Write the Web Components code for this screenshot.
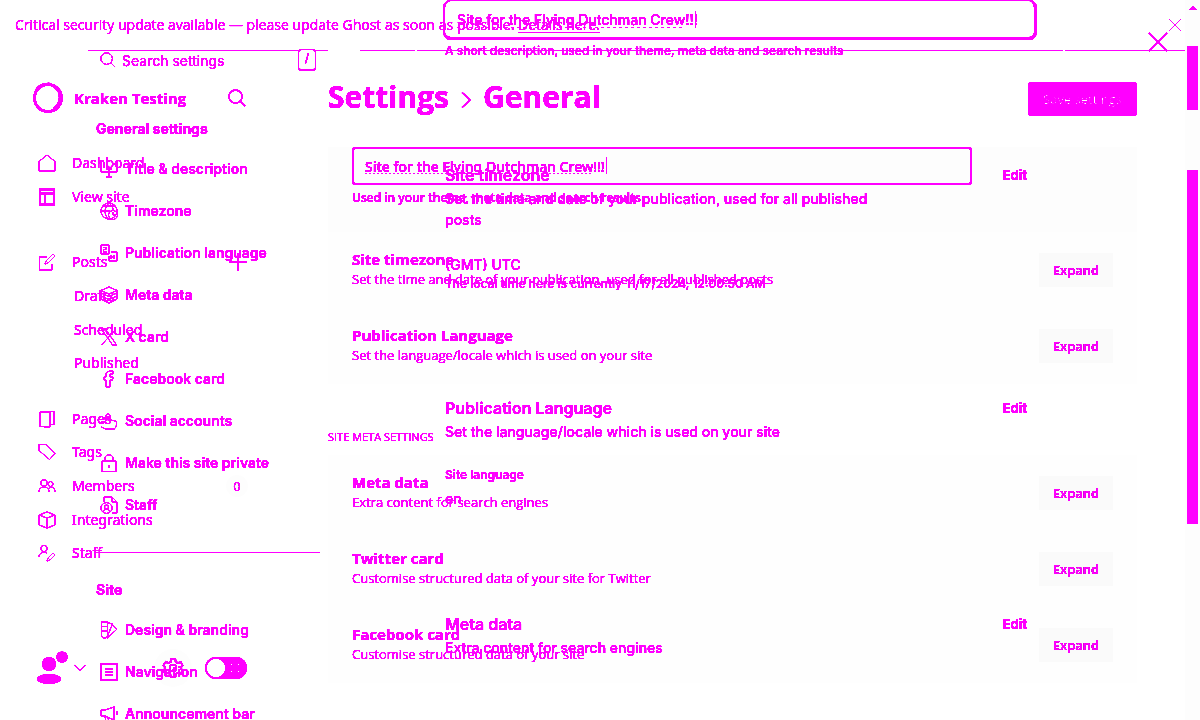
<!DOCTYPE html>
<html lang="en">
<head>
<meta charset="utf-8">
<title>Settings: General</title>
<style>
html,body{margin:0;background:#fff;overflow:hidden}
</style>
</head>
<body>
<settings-diff></settings-diff>

<script>
const INK = '#f0f';
const define = (name, html, setup) => {
  const t = document.createElement('template');
  t.innerHTML = html;
  customElements.define(name, class extends HTMLElement {
    connectedCallback() {
      if (this.shadowRoot) return;
      this.attachShadow({mode: 'open'}).append(t.content.cloneNode(true));
      if (setup) setup(this.shadowRoot, this);
    }
  });
};

const ICONS = {
  home: '<path d="M1 7.500L9 1l8 6.500V17H1z"/>',
  layout: '<path d="M2 1.500h14v15H2zM2 5.500h14M7 5.500v11" stroke-width="1.600"/>',
  edit: '<path d="M9 4H1.500v13H14v-6M7 11l1-3 7-7 2 2-7 7z"/>',
  pages: '<path d="M2 2h10v14.500H2zM5 1.500h11v13h-3M5 16l1 1h6"/>',
  tag: '<path d="M1 1.500h7l9 9-5.500 6L1 7.500z"/>',
  members: '<circle cx="6" cy="6" r="3.200"/><circle cx="12.500" cy="7" r="2.500"/><path d="M1 15c0-7 10-7 10 0M11 11c3-2 6 0 6 4"/>',
  cube: '<path d="M9 1l8 3v10l-8 3-8-3V4zM1 4l8 3 8-3M9 7v10"/>',
  staffpen: '<circle cx="6" cy="4.500" r="3.200"/><path d="M1 13c0-4 4-5.500 8-4M9 17l1-3 5-5 2 2-5 5z"/>',
  search: '<circle cx="7.500" cy="7.500" r="6.500"/><path d="M12.500 12.500L17 17"/>',
  plus: '<path d="M9 0v18M0 9h18"/>',
  close: '<path d="M1 1l16 16M17 1L1 17"/>',
  right: '<path d="M5 1.500L13 9l-8 7.500"/>',
  down: '<path d="M1 5l8 8 8-8"/>',
  desc: '<path d="M1 1v11h6M17 1v11h-6M9 9v8M6 9h6M6 17h6M3 12h12"/>',
  globe: '<circle cx="9" cy="9" r="8"/><path d="M1 9h9M3 4h12M9 1C4 6 4 12 8 17M9 1c3 2 4 5 4 8"/><circle cx="13" cy="13" r="4.500"/><path d="M13 10v3h3"/>',
  lang: '<path d="M1 1h8v9H1zM3 3.500h4M3 6l4-1.500M3 8h4M11 8h6v9H9v-5M11 15v-4l3 4v-4"/>',
  layers: '<path d="M9 1l8 3.500L9 8 1 4.500zM1 7l8 3.500L17 7M1 10l8 3.500 8-3.500M1 13l8 4 8-4M1 4.500V13M17 4.500V13"/>',
  x: '<path d="M1.500 1h4l11 16h-4zM16 1L1.500 17"/>',
  fb: '<path d="M6 17V10H4V7h2V5c0-3 2-4 7-4v3h-3v3h3l-.500 3H10v7z"/>',
  social: '<path d="M6 9V4c0-3 4-3 4 0v4l6 1c1 0 1 7-2 8H6l-5-2M1 10h5M4 6h7"/>',
  lock: '<path d="M2 7h14v10.500H2zM5 7V4.500C5-.500 13-.500 13 4.500V7M9 11v3"/>',
  stafffile: '<path d="M4 6V1h8l5 5v11h-5M12 1v5h5"/><circle cx="6.500" cy="12" r="5.500"/><circle cx="6.500" cy="11" r="2"/><path d="M3 16c1-4 6-4 7 0"/>',
  swatch: '<path d="M1.500 1h6v13c0 4-6 4-6 0zM1.500 5.500h6M1.500 10h6M7.500 1.500l5 1.500-5 12M12 4l5 4-9.500 9"/>',
  list: '<path d="M1 1h16v16H1zM5 6h8M5 9h8M5 12h8" stroke-width="1.500"/>',
  horn: '<path d="M1 5v6h4l9 4V2L5 5zM14 1v14M17 6v4M5 11l1 6h3l-1-4"/>',
  gear: '<circle cx="9" cy="9" r="3"/><path d="M7 1h4l.500 2.500 2 1L16 3.500l1.500 3L16 9l1.500 2.500-2 3-2.500-1-2 1L11 17H7l-.500-2.500-2-1-2.500 1-1.500-3L2 9 .500 6.500l2-3 2.500 1 2-1z" stroke-width="1.500"/>'
};
class UiIcon extends HTMLElement {
  static observedAttributes = ['name'];
  constructor() {
    super();
    this.attachShadow({mode: 'open'});
  }
  attributeChangedCallback() {
    this.shadowRoot.innerHTML =
      `<style>:host{display:block;flex:none;width:var(--s,18px);height:var(--s,18px)}svg{display:block;overflow:visible;fill:none;stroke:currentColor;stroke-width:var(--w,1)}</style>
       <svg viewBox="0 0 18 18" width="100%" height="100%" aria-hidden="true">${ICONS[this.getAttribute('name')]}</svg>`;
  }
}
customElements.define('ui-icon', UiIcon);

/* ---------- previous admin ---------- */

define('legacy-alert', `
<style>
:host{display:flex;align-items:center;justify-content:space-between;height:50px;padding:0 4px 0 15px;font:14px/20px "Open Sans",sans-serif}
a{color:inherit;text-underline-offset:2px}
button{all:unset;display:block}
ui-icon{--s:12px}
</style>
<span>Critical security update available — please update Ghost as soon as possible. <a href="#details">Details here.</a></span>
<button aria-label="Dismiss"><ui-icon name="close"></ui-icon></button>`);

define('nav-link', `
<style>
:host{display:flex;flex:1;align-items:center}
a{display:grid;grid-template-columns:18px 1fr;gap:16px;align-items:center;color:inherit;text-decoration:none;flex:1}
ui-icon{--s:18px}
:host([sub]) a{display:block;padding-left:36px}
:host([sub]) ui-icon{display:none}
</style>
<a href="#"><ui-icon></ui-icon><slot></slot></a><slot name="end"></slot>`,
(r, h) => r.querySelector('ui-icon').setAttribute('name', h.getAttribute('icon') || 'home'));

define('legacy-sidebar', `
<style>
:host{display:flex;flex-direction:column;width:280px;box-sizing:border-box;padding:30px 32px 0;font:14px/20px "Noto Sans",sans-serif}
header{display:flex;align-items:center;height:34px;font:700 15px/20px "Open Sans",sans-serif;margin-bottom:31px}
.logo{display:block;width:32px;height:32px;margin-right:10px;overflow:visible}
header ui-icon{margin:0 2px 0 auto;--w:1.300}
nav{padding-left:6px;display:flex;flex-direction:column}
.a{height:68px}.b{height:34px;margin-top:31px}.c{height:101px}.d{height:168px;margin-top:22px}
.add{margin-right:1px}
.count{width:22px;height:22px;border-radius:50%;background:rgba(0,0,0,.02);text-align:center;line-height:22px;font-size:13px}
footer{display:flex;align-items:center;margin-top:78px;height:40px;padding-right:1px}
.avatar{width:36px;height:36px;overflow:visible;fill:currentColor}
.menu{all:unset;display:block;margin-left:6px}
.menu ui-icon{--s:12px;--w:1.500}
.gear{display:flex;margin-left:auto;width:38px;height:38px;border-radius:50%;background:rgba(0,0,0,.02);align-items:center;justify-content:center;color:inherit}
.gear ui-icon{--s:20px}
.toggle{appearance:none;margin:0 0 0 13px;width:42px;height:22px;border-radius:11px;
background:radial-gradient(circle at 11px 11px,#fff 9px,transparent 10px),
linear-gradient(#fff,#fff) 26px 7px/1px 1px no-repeat,linear-gradient(#fff,#fff) 33px 7px/1px 1px no-repeat,
linear-gradient(#fff,#fff) 26px 14px/1px 1px no-repeat,linear-gradient(#fff,#fff) 33px 14px/1px 1px no-repeat,#f0f}
</style>
<header>
<svg class="logo" viewBox="0 0 32 32" fill="none" stroke="currentColor" aria-hidden="true"><circle cx="16" cy="16" r="13.500" stroke-width="2.500"/><path d="M22 4c9 6 8 17 0 23M4 9C8 2 14 2 19 2.500" stroke-width="3"/></svg>
<span>Kraken Testing</span><ui-icon name="search"></ui-icon></header>
<nav class="a"><nav-link icon="home">Dashboard</nav-link><nav-link icon="layout">View site</nav-link></nav>
<nav class="b"><nav-link icon="edit">Posts<ui-icon class="add" slot="end" name="plus"></ui-icon></nav-link></nav>
<nav class="c"><nav-link sub>Drafts</nav-link><nav-link sub>Scheduled</nav-link><nav-link sub>Published</nav-link></nav>
<nav class="d"><nav-link icon="pages">Pages</nav-link><nav-link icon="tag">Tags</nav-link><nav-link icon="members">Members<span class="count" slot="end">0</span></nav-link><nav-link icon="cube">Integrations</nav-link><nav-link icon="staffpen">Staff</nav-link></nav>
<footer>
<svg class="avatar" viewBox="0 0 36 36" aria-hidden="true"><circle cx="17" cy="14" r="7"/><ellipse cx="17" cy="29" rx="12" ry="5"/><circle cx="30" cy="7" r="5.500"/></svg>
<button class="menu" aria-label="Account menu"><ui-icon name="down"></ui-icon></button>
<a class="gear" href="#settings" aria-label="Settings"><ui-icon name="gear"></ui-icon></a>
<input class="toggle" type="checkbox" aria-label="Dark mode">
</footer>`);

define('legacy-row', `
<style>
:host{display:flex;flex:1;align-items:center;justify-content:space-between;padding:0 24px}
div{padding-bottom:3px}
b{display:block;font:700 15px/20px "Open Sans",sans-serif}
p{margin:0;font:13px/20px "Open Sans",sans-serif}
button{border:0;background:rgba(0,0,0,.03);color:inherit;width:74px;height:34px;padding:0;font:600 13px/20px "Open Sans",sans-serif}
</style>
<div><b><slot></slot></b><p><slot name="note"></slot></p></div><button>Expand</button>`);

define('legacy-main', `
<style>
:host{display:block;padding:31px 48px 0;font:13px/20px "Open Sans",sans-serif}
header{display:flex;align-items:center;height:34px}
h1{display:flex;align-items:center;margin:0;padding-bottom:4px;font:700 30px/34px "Open Sans",sans-serif;gap:8px}
h1 ui-icon{--w:1.500;margin-top:6px}
h1+button{margin-left:auto;width:109px;height:34px;border:0;border-radius:3px;padding:0;background:#f0f;color:#fff;font:13px/20px "Open Sans",sans-serif}
.panel{display:flex;flex-direction:column;background:rgba(0,0,0,.01)}
.field{margin-top:31px;height:85px;box-sizing:border-box;padding:0 24px;background:rgba(0,0,0,.015)}
input{display:block;width:620px;max-width:100%;height:38px;box-sizing:border-box;border:2px solid #f0f;border-radius:3px;padding:0 11px;outline:0;color:inherit;font:500 14px/20px "Noto Sans",sans-serif;
background:linear-gradient(#f0f,#f0f) 252px 8px/1px 17px no-repeat,repeating-linear-gradient(90deg,#f0f 0 2px,transparent 2px 4px) 11px 24px/228px 1px no-repeat}
label{display:block;margin-top:3px;font:600 12px/20px "Open Sans",sans-serif}
.one{height:152px}
h2{margin:43px 0 0;font:11px/20px "Open Sans",sans-serif}
.two{margin-top:8px;height:228px}
</style>
<header><h1>Settings<ui-icon name="right"></ui-icon>General</h1><button>Save settings</button></header>
<div class="panel field"><input id="d" spellcheck="false" value="Site for the Flying Dutchman Crew!!!"><label for="d">Used in your theme, meta data and search results</label></div>
<div class="panel one">
<legacy-row>Site timezone<span slot="note">Set the time and date of your publication, used for all published posts</span></legacy-row>
<legacy-row>Publication Language<span slot="note">Set the language/locale which is used on your site</span></legacy-row></div>
<h2>SITE META SETTINGS</h2>
<div class="panel two">
<legacy-row>Meta data<span slot="note">Extra content for search engines</span></legacy-row>
<legacy-row>Twitter card<span slot="note">Customise structured data of your site for Twitter</span></legacy-row>
<legacy-row>Facebook card<span slot="note">Customise structured data of your site</span></legacy-row></div>`);

define('legacy-admin', `
<style>
:host{display:block;padding-right:15px}
.rule{height:1px;background:linear-gradient(90deg,transparent 88px,#f0f 88px 298px,transparent 298px 316px,#f0f 316px 328px,transparent 328px 360px,#f0f 360px 415px,transparent 415px 417px,#f0f 417px 1063px,transparent 1063px 1065px,#f0f 1065px)}
.body{display:grid;grid-template-columns:280px 1fr}
</style>
<legacy-alert></legacy-alert><div class="rule"></div>
<div class="body"><legacy-sidebar></legacy-sidebar><legacy-main></legacy-main></div>`);

/* ---------- current admin ---------- */

define('settings-link', `
<style>
:host{display:block}
a{display:flex;align-items:center;gap:7px;height:42px;padding-left:4px;color:inherit;text-decoration:none;font:600 14px/20px Inter,sans-serif}
</style>
<a href="#"><ui-icon></ui-icon><slot></slot></a>`,
(r, h) => r.querySelector('ui-icon').setAttribute('name', h.getAttribute('icon')));

define('settings-nav', `
<style>
:host{display:block;padding:49px 0 0 96px;width:320px;box-sizing:border-box;font:14px/20px Inter,sans-serif}
.search{display:flex;align-items:center;height:22px;padding:0 4px}
.search ui-icon{--s:16px;margin-right:6px}
input{all:unset;flex:1;min-width:0;padding-top:2px;font:400 14px/20px Inter,sans-serif}
input::placeholder{color:#f0f;opacity:1}
kbd{box-sizing:border-box;width:18px;height:22px;border:1px solid;border-bottom-width:2px;border-radius:4px;text-align:center;font:500 12px/16px Inter,sans-serif}
h2{display:block;margin:0;font:700 14px/20px Inter,sans-serif}
.first{margin:48px 0 9px}
.one{border-bottom:1px solid #f0f;padding-bottom:26px}
.second{margin:27px 0 9px}
</style>
<div class="search"><ui-icon name="search"></ui-icon><input type="search" aria-label="Search settings" placeholder="Search settings"><kbd>/</kbd></div>
<h2 class="first">General settings</h2>
<nav class="one">
<settings-link icon="desc">Title &amp; description</settings-link><settings-link icon="globe">Timezone</settings-link><settings-link icon="lang">Publication language</settings-link><settings-link icon="layers">Meta data</settings-link><settings-link icon="x">X card</settings-link><settings-link icon="fb">Facebook card</settings-link><settings-link icon="social">Social accounts</settings-link><settings-link icon="lock">Make this site private</settings-link><settings-link icon="stafffile">Staff</settings-link></nav>
<h2 class="second">Site</h2>
<nav><settings-link icon="swatch">Design &amp; branding</settings-link><settings-link icon="list">Navigation</settings-link><settings-link icon="horn">Announcement bar</settings-link></nav>`);

define('settings-card', `
<style>
:host{display:block;font:500 14px/21px Inter,sans-serif}
header{display:flex;justify-content:space-between;align-items:center;height:24px}
h2{margin:0;font:600 16px/24px Inter,sans-serif}
button{all:unset;font:700 13px/20px Inter,sans-serif}
p{margin:1px 0 0;padding-right:150px}
</style>
<header><h2><slot></slot></h2><button>Edit</button></header><p><slot name="note"></slot></p><slot name="body"></slot>`);

define('settings-main', `
<style>
:host{display:block;padding:0 158px 0 123px;font:14px/20px Inter,sans-serif;min-width:0}
input{display:block;width:594px;box-sizing:border-box;height:40px;border:3px solid #f0f;border-top-width:1px;border-left-width:2px;border-radius:8px;outline:0;padding:0 12px;color:inherit;font:500 14px/20px Inter,sans-serif;
background:linear-gradient(#f0f,#f0f) 250px 10px/1px 17px no-repeat,repeating-linear-gradient(90deg,#f0f 0 3px,transparent 3px 6px) 12px 26px/225px 1px no-repeat}
label{display:block;margin:1px 2px 0;font:500 12px/20px Inter,sans-serif}
settings-card{margin-left:2px}
.t1{margin-top:102px}.t2,.t3{margin-top:103px}
.val{display:block;margin-top:24px}
small{display:block;font:500 12px/18px Inter,sans-serif}
small b{display:block;font-weight:600;margin-bottom:4px}
</style>
<input id="s" spellcheck="false" value="Site for the Flying Dutchman Crew!!!"><label for="s">A short description, used in your theme, meta data and search results</label>
<settings-card class="t1">Site timezone<span slot="note">Set the time and date of your publication, used for all published posts</span><div slot="body" class="val">(GMT) UTC<small>The local time here is currently 11/17/2024, 12:00:50 AM</small></div></settings-card>
<settings-card class="t2">Publication Language<span slot="note">Set the language/locale which is used on your site</span><div slot="body" class="val"><small><b>Site language</b></small><span>en</span></div></settings-card>
<settings-card class="t3">Meta data<span slot="note">Extra content for search engines</span></settings-card>`);

define('scroll-rail', `
<style>
:host{display:grid;grid-template-rows:46px 64px 60px 354px 1fr;justify-items:center;width:15px;background:rgba(0,0,0,.02)}
i{width:11px}
.t{background:#f0f}
svg{display:block;fill:#f0f;margin-top:6px}
svg.end{align-self:end;margin-bottom:7px;fill:rgba(0,0,0,.1)}
</style>
<svg width="8" height="4" aria-hidden="true"><path d="M0 4l4-4 4 4z"/></svg><i class="t"></i><i></i><i class="t"></i><svg class="end" width="8" height="4" aria-hidden="true"><path d="M0 0h8L4 4z"/></svg>`);

define('current-admin', `
<style>
:host{display:grid;grid-template-columns:320px 1fr 15px}
.exit{all:unset;position:absolute;right:32px;top:32px}
.exit ui-icon{--s:20px;--w:1.500}
</style>
<settings-nav></settings-nav><settings-main></settings-main><scroll-rail></scroll-rail>
<button class="exit" aria-label="Close settings"><ui-icon name="close"></ui-icon></button>`);

/* Both versions share one grid cell; the filter hardens glyph edges to solid ink. */
define('settings-diff', `
<style>
:host{display:grid;height:100vh;overflow:hidden;color:${INK};position:relative}
legacy-admin,current-admin{grid-area:1/1;min-height:0}
.ink{filter:url(#ink)}
svg{position:absolute;width:0;height:0}
</style>
<svg aria-hidden="true"><filter id="ink" x="0" y="0" width="100%" height="100%" color-interpolation-filters="sRGB"><feComponentTransfer><feFuncG type="table" tableValues="0 0 0 0 0 0 0 0 0 .2 1"/><feFuncA type="table" tableValues="0 .05 1 1 1 1 1 1 1 1 1"/></feComponentTransfer></filter></svg>
<legacy-admin class="ink"></legacy-admin><current-admin class="ink"></current-admin>`);
</script>
</body>
</html>
